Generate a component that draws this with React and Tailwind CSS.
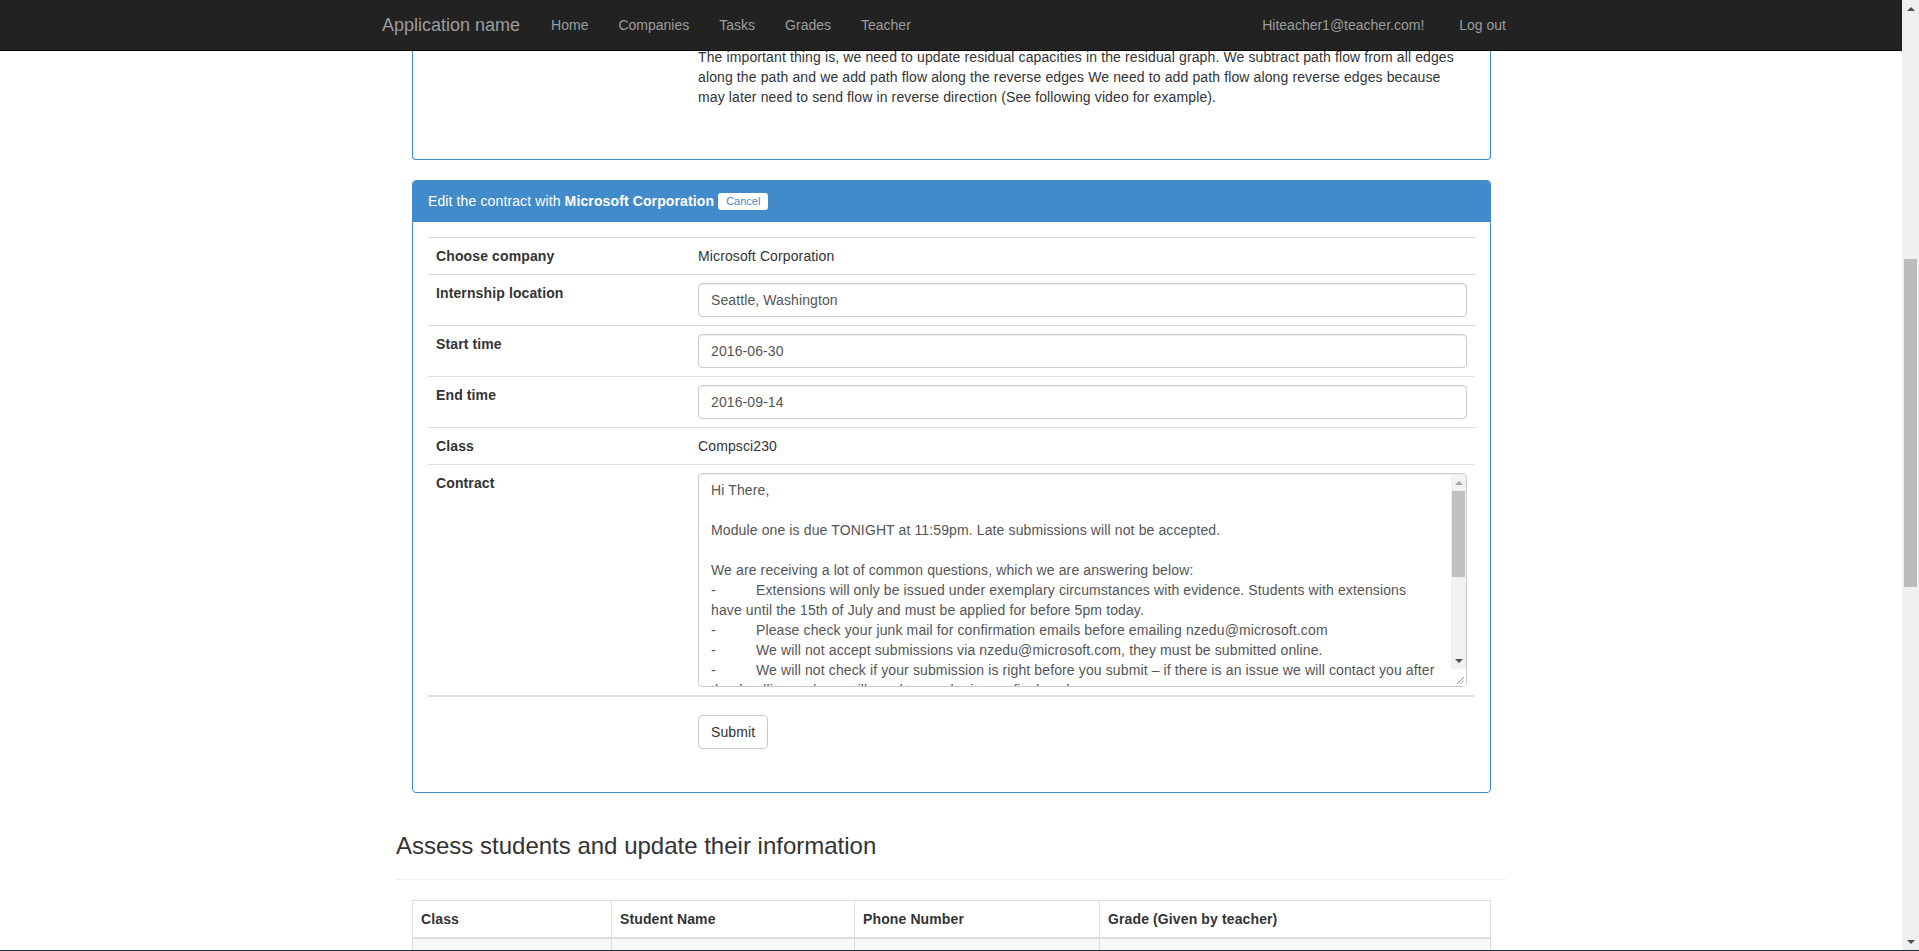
import React from 'react';

const navLinks = ['Home', 'Companies', 'Tasks', 'Grades', 'Teacher'];

const contractLines = [
  { text: 'Hi There,' },
  { text: '' },
  { text: 'Module one is due TONIGHT at 11:59pm. Late submissions will not be accepted.' },
  { text: '' },
  { text: 'We are receiving a lot of common questions, which we are answering below:' },
  { dash: true, text: 'Extensions will only be issued under exemplary circumstances with evidence. Students with extensions' },
  { text: 'have until the 15th of July and must be applied for before 5pm today.' },
  { dash: true, text: 'Please check your junk mail for confirmation emails before emailing nzedu@microsoft.com' },
  { dash: true, text: 'We will not accept submissions via nzedu@microsoft.com, they must be submitted online.' },
  { dash: true, text: 'We will not check if your submission is right before you submit \u2013 if there is an issue we will contact you after' },
  { text: 'the deadline and you will need to resubmit your final work.' },
];

const studentCols = [
  { name: 'Class', w: 'w-[199px]' },
  { name: 'Student Name', w: 'w-[243px]' },
  { name: 'Phone Number', w: 'w-[245px]' },
  { name: 'Grade (Given by teacher)', w: '' },
];

function Navbar() {
  return (
    <nav className="relative z-10 h-[51px] shrink-0 border-b border-[#080808] bg-[#222]">
      <div className="mx-auto flex h-[50px] w-[1170px] items-center px-[15px] leading-[20px] text-[#9d9d9d]">
        <a className="pl-px text-[18px]">Application name</a>
        <ul className="ml-[16px] flex">
          {navLinks.map((l) => (
            <li key={l} className="px-[15px]">{l}</li>
          ))}
        </ul>
        <ul className="ml-auto flex">
          <li className="px-[15px]">Hiteacher1@teacher.com!</li>
          <li className="pl-[20px] pr-[15px]">Log out</li>
        </ul>
      </div>
    </nav>
  );
}

function TextInput({ value }) {
  return (
    <input
      readOnly
      value={value}
      className="block h-[34px] w-full rounded-[4px] border border-[#ccc] bg-white px-[12px] py-[6px] leading-[20px] tracking-[0.1px] text-[#555] shadow-[inset_0_1px_1px_rgba(0,0,0,0.075)] outline-none"
    />
  );
}

function ContractBox() {
  return (
    <div className="flex h-[214px] overflow-hidden rounded-[4px] border border-[#ccc] bg-white shadow-[inset_0_1px_1px_rgba(0,0,0,0.075)]">
      <div className="min-w-0 flex-1 overflow-hidden whitespace-nowrap px-[12px] pt-[6px] leading-[20px] text-[#555]">
        {contractLines.map((line, i) => (
          <div key={i} className="h-[20px]">
            {line.dash && <span className="inline-block w-[45px]">-</span>}
            {line.text}
          </div>
        ))}
      </div>
      {/* textarea scrollbar + resize grip */}
      <div className="flex w-[15px] shrink-0 flex-col bg-[#f1f1f1]">
        <div className="flex h-[17px] items-center justify-center">
          <div className="h-0 w-0 border-x-[4px] border-b-[4px] border-x-transparent border-b-[#a3a3a3]" />
        </div>
        <div className="mx-[1px] h-[86px] bg-[#c1c1c1]" />
        <div className="flex-1" />
        <div className="flex h-[17px] items-center justify-center">
          <div className="h-0 w-0 border-x-[4px] border-t-[4px] border-x-transparent border-t-[#505050]" />
        </div>
        <div className="relative h-[17px] bg-white">
          <svg className="absolute bottom-[2px] right-[2px]" width="7" height="7" viewBox="0 0 7 7">
            <path d="M7 0 L0 7 M7 3.5 L3.5 7" stroke="#9a9a9a" strokeWidth="1" />
          </svg>
        </div>
      </div>
    </div>
  );
}

function EditPanel() {
  const rowTh = 'w-[262px] border-t border-[#ddd] p-[8px] text-left align-top font-bold';
  const rowTd = 'border-t border-[#ddd] p-[8px] align-top';
  return (
    <div className="mb-[20px] overflow-hidden rounded-[4px] border border-[#428bca]">
      <div className="h-[41px] border-b border-[#428bca] bg-[#428bca] px-[15px] py-[10px] leading-[20px] text-white">
        Edit the contract with <b>Microsoft Corporation</b>{' '}
        <button className="inline-block h-[17px] rounded-[3px] bg-white px-[8px] align-[1px] text-[11px] leading-[17px] tracking-normal text-[#428bca]">
          Cancel
        </button>
      </div>
      <div className="p-[15px]">
        <table className="mb-[20px] w-full border-collapse">
          <tbody>
            <tr>
              <th className={rowTh}>Choose company</th>
              <td className={rowTd}>Microsoft Corporation</td>
            </tr>
            <tr>
              <th className={rowTh}>Internship location</th>
              <td className={rowTd}><TextInput value="Seattle, Washington" /></td>
            </tr>
            <tr>
              <th className={rowTh}>Start time</th>
              <td className={rowTd}><TextInput value="2016-06-30" /></td>
            </tr>
            <tr>
              <th className={rowTh}>End time</th>
              <td className={rowTd}><TextInput value="2016-09-14" /></td>
            </tr>
            <tr>
              <th className={rowTh}>Class</th>
              <td className={rowTd}>Compsci230</td>
            </tr>
            <tr>
              <th className={rowTh}>Contract</th>
              <td className={rowTd}><ContractBox /></td>
            </tr>
          </tbody>
          <tbody>
            <tr>
              <td className="border-t-2 border-[#ddd] px-[8px] pb-[8px] pt-[18px]" />
              <td className="border-t-2 border-[#ddd] px-[8px] pb-[8px] pt-[18px]">
                <button className="h-[34px] rounded-[4px] border border-[#ccc] bg-white px-[12px] leading-[20px] text-[#333]">
                  Submit
                </button>
              </td>
            </tr>
          </tbody>
        </table>
      </div>
    </div>
  );
}

function PageScrollbar() {
  return (
    <div className="flex w-[17px] shrink-0 flex-col bg-[#f0f0f0]">
      <div className="flex h-[17px] items-center justify-center">
        <div className="h-0 w-0 border-x-[4px] border-b-[4px] border-x-transparent border-b-[#505050]" />
      </div>
      <div className="h-[242px]" />
      <div className="mx-[2px] h-[328px] bg-[#bcbcbc]" />
      <div className="flex-1" />
      <div className="flex h-[17px] items-center justify-center">
        <div className="h-0 w-0 border-x-[4px] border-t-[4px] border-x-transparent border-t-[#505050]" />
      </div>
    </div>
  );
}

export default function App() {
  return (
    <div className="flex h-[951px] w-[1919px] flex-col overflow-hidden bg-white font-['Liberation_Sans',Arial,sans-serif] text-[14px] leading-[20px] text-[#333]">
      <div className="flex min-h-0 flex-1">
        <div className="min-w-0 flex-1 overflow-hidden">
          <Navbar />
          <div className="mx-auto -mt-[4px] flex w-[1170px] flex-col px-[30px] tracking-[0.12px]">
            {/* previous panel, scrolled mostly out of view */}
            <div className="pl-[16px] pr-[15px]">
              <div className="mb-[20px] rounded-b-[4px] border border-t-0 border-[#428bca] px-[15px] pb-[14px]">
                <table className="mb-[20px] w-full">
                  <tbody>
                    <tr>
                      <td className="w-[262px] px-[8px]" />
                      <td className="px-[8px] pb-[8px]">
                        <p className="mb-[10px] whitespace-nowrap">
                          The important thing is, we need to update residual capacities in the residual graph. We subtract path flow from all edges
                          <br />
                          along the path and we add path flow along the reverse edges We need to add path flow along reverse edges because
                          <br />
                          may later need to send flow in reverse direction (See following video for example).
                        </p>
                      </td>
                    </tr>
                  </tbody>
                </table>
              </div>
              <EditPanel />
            </div>

            <h3 className="mt-[20px] text-[24px] font-medium leading-[26.4px] tracking-normal">
              Assess students and update their information
            </h3>
            <hr className="my-[20px] border-t border-[#eee]" />

            <div className="pl-[16px] pr-[15px]">
              <table className="w-full border-collapse border border-[#ddd]">
                <thead>
                  <tr>
                    {studentCols.map((c) => (
                      <th key={c.name} className={`${c.w} border border-b-2 border-[#ddd] p-[8px] text-left font-bold`}>
                        {c.name}
                      </th>
                    ))}
                  </tr>
                </thead>
                <tbody>
                  <tr className="bg-[#f9f9f9]">
                    {studentCols.map((c) => (
                      <td key={c.name} className="h-[37px] border border-[#ddd] p-[8px]" />
                    ))}
                  </tr>
                </tbody>
              </table>
            </div>
          </div>
        </div>
        <PageScrollbar />
      </div>
      <div className="h-px shrink-0 bg-[#1f2d3b]" />
    </div>
  );
}
